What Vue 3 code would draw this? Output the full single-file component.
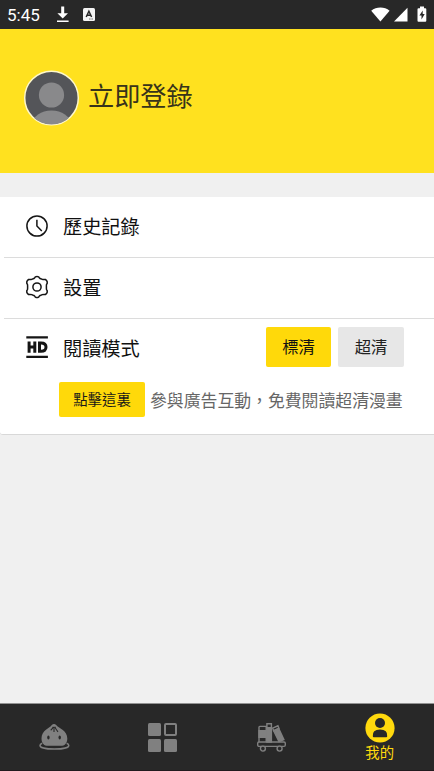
<script setup>
const account = '立即登錄'
const rows = [
  { id: 'history', label: '歷史記錄' },
  { id: 'settings', label: '設置' },
]
</script>

<template>
  <div class="screen">
    <header class="status">
      <span class="time">5:45</span>
      <svg class="download" viewBox="0 0 14 17"><path d="M5.2 .5h3v6.7H12L6.7 12.6 1.4 7.2h3.8zM1 14.6h11.6V16H1z" fill="#fff" /></svg>
      <svg class="lang" viewBox="0 0 12 13"><rect width="12" height="13" rx="1.5" fill="#f4f4f4" /><path d="M3.2 9 5.9 3.2 8.6 9M4.2 7.2h3.4" fill="none" stroke="#282828" stroke-width="1.5" /><path d="M6.4 11h1M8.6 11h1" stroke="#282828" /></svg>
      <div class="system">
        <svg width="19" height="15" viewBox="0 0 19 15"><path d="M.2 3.7C5.4-.5 13.5-.5 18.6 3.7L9.4 14.6z" fill="#fff" /></svg>
        <svg width="14" height="15" viewBox="0 0 14 15"><path d="M13.5.8v13.7H0z" fill="#fff" /></svg>
        <svg width="10" height="17" viewBox="0 0 10 17"><path d="M3 .5h4v1.8h1.3q1 0 1 1v11.4q0 1-1 1H1.5q-1 0-1-1V3.3q0-1 1-1H3z" fill="#fff" /><path d="M5.7 4.5 2.4 9.6h2.1v3.9l3.2-5.4H5.7z" fill="#282828" /></svg>
      </div>
    </header>

    <section class="profile">
      <svg class="avatar" viewBox="0 0 56 56">
        <defs><clipPath id="face"><circle cx="28" cy="28" r="26.6" /></clipPath></defs>
        <circle cx="28" cy="28" r="26.8" fill="#545559" stroke="#fff8ca" stroke-width="1.5" />
        <g clip-path="url(#face)" fill="#89898b"><circle cx="28" cy="25" r="12.6" /><ellipse cx="28" cy="54" rx="19" ry="13.4" /></g>
      </svg>
      <span class="login">{{ account }}</span>
    </section>

    <main class="card">
      <div v-for="row in rows" :key="row.id" class="row">
        <svg v-if="row.id === 'history'" class="icon" viewBox="0 0 24 24"><circle cx="12" cy="12" r="10.1" /><path d="M11.9 5.8v6.1l4.9 5" /></svg>
        <svg v-else class="icon" viewBox="0 0 24 24"><path d="M10.4 1.9Q12 .9 13.6 1.9L14.5 3.1Q15 3.7 15.8 3.8L17.4 4.4Q18.2 4.7 19 4.4L20.4 4.5Q21.8 5.3 22.2 6.8V8.3L21.7 9.2Q21.3 10 21.4 11V13Q21.3 14 21.7 14.8L22.2 15.7V17.2Q21.8 18.7 20.4 19.5L19 19.6Q18.2 19.3 17.4 19.6L15.8 20.2Q15 20.3 14.5 20.9L13.6 22.1Q12 23.1 10.4 22.1L9.5 20.9Q9 20.3 8.2 20.2L6.6 19.6Q5.8 19.3 5 19.6L3.6 19.5Q2.2 18.7 1.8 17.2V15.7L2.3 14.8Q2.7 14 2.6 13V11Q2.7 10 2.3 9.2L1.8 8.3V6.8Q2.2 5.3 3.6 4.5L5 4.4Q5.8 4.7 6.6 4.4L8.2 3.8Q9 3.7 9.5 3.1Z" /><circle cx="12" cy="12" r="4.1" /></svg>
        <span class="label">{{ row.label }}</span>
      </div>
      <div class="row mode">
        <svg class="icon" viewBox="0 0 24 24"><path d="M1.3 2.3h21.6M1.3 21.8h21.6" stroke-width="2.2" /><path d="M4.1 6.4v11.4M9.8 6.4v11.4M4.1 12.1h5.7M14.5 7.9h1.6q4.9 0 4.9 4.2t-4.9 4.2h-1.6z" stroke-width="3" /></svg>
        <span class="label">閱讀模式</span>
        <button class="quality active">標清</button>
        <button class="quality">超清</button>
      </div>
      <div class="promo">
        <button class="tap">點擊這裏</button>
        <span>參與廣告互動，免費閱讀超清漫畫</span>
      </div>
    </main>

    <nav class="tabs">
      <div class="tab">
        <svg width="31" height="29" viewBox="0 0 31 29">
          <path d="M3.2 20.2q-2.2.8-2.2 2.2c0 2.1 5.2 3.7 14.4 3.7s14.4-1.6 14.4-3.7q0-1.4-2.2-2.2" fill="none" stroke="#808080" stroke-width="1.5" />
          <path d="M12.6 2.2q2.4-2.6 4.8 0c2.6 3.2 10.9 5 10.9 13.2 0 5-2.8 7.4-6.4 7.4H8.9c-3.6 0-6.4-2.4-6.4-7.4C2.5 7.4 10.2 5.4 12.6 2.2z" fill="#808080" />
          <path d="M14.4 3.8q-1 2.2-2.7 3.4M15 4v5M15.8 3.7q.8 2.5 3.2 5.1" fill="none" stroke="#282828" stroke-width="1.1" />
          <ellipse cx="9.4" cy="14.6" rx="1.2" ry="2" fill="#282828" /><ellipse cx="20.7" cy="14.6" rx="1.2" ry="2" fill="#282828" />
        </svg>
      </div>
      <div class="tab">
        <svg width="29" height="29" viewBox="0 0 29 29" fill="#808080"><rect width="13" height="13" rx="1.5" /><rect y="16" width="13" height="13" rx="1.5" /><rect x="16" y="16" width="13" height="13" rx="1.5" /><rect x="17" y="1" width="11" height="11" rx="1" fill="none" stroke="#808080" stroke-width="2" /></svg>
      </div>
      <div class="tab">
        <svg width="29" height="29" viewBox="0 0 29 29" fill="none" stroke="#808080" stroke-width="1.4">
          <path d="M2 19V4.2q0-.8.8-.8h6.4V19" /><path d="M2 7.6h7v6.8H2z" fill="#808080" />
          <path d="M9.9 4.6h4.5V19H9.9z" fill="#808080" /><path d="M9.9 5V.7h4.5V5" />
          <path d="m15.7 5.2 5.2-2.4 1 2.7-5.2 2.3z" /><path d="m16.6 7.7 5.1-2.2L26.9 16.6l-4.9 2.1z" fill="#808080" />
          <rect x=".7" y="19" width="27.6" height="4.4" rx="1.3" /><circle cx="5.9" cy="25.6" r="2.5" fill="#282828" /><circle cx="22.6" cy="25.6" r="2.5" fill="#282828" />
        </svg>
      </div>
      <div class="tab selected">
        <svg width="30" height="30" viewBox="0 0 30 30"><circle cx="15" cy="15" r="14.6" fill="#ffd90d" /><circle cx="15" cy="10" r="5" fill="#282828" /><path d="M7.8 23.2q-.7-6.8 7.2-6.8t7.2 6.8q0 1-1 1H8.8q-1 0-1-1z" fill="#282828" /></svg>
        <span>我的</span>
      </div>
    </nav>
  </div>
</template>

<style>
body { margin: 0; background: #f0f0f0; }
</style>

<style scoped>
.screen { height: 771px; display: flex; flex-direction: column; background: #f0f0f0; font-family: "Noto Sans CJK TC", sans-serif; overflow: hidden; }
.status { height: 29px; flex: none; display: flex; align-items: center; background: #282828; color: #fff; box-sizing: border-box; padding: 0 7px 0 7px; }
.time { font: 400 17px/29px Roboto, sans-serif; width: 49px; padding-top: 1px; }
.download { width: 14px; height: 17px; }
.lang { width: 12px; height: 13px; margin-left: 13px; }
.system { display: flex; align-items: center; margin-left: auto; gap: 4px; }
.system svg:last-child { margin-left: 5px; }
.profile { height: 144px; flex: none; box-sizing: border-box; padding: 41px 0 0 23px; display: flex; align-items: flex-start; background: #ffe11f; }
.avatar { width: 57px; height: 56px; }
.login { font-size: 26.2px; line-height: 51px; margin-left: 8px; color: #37331b; }
.card { height: 238px; flex: none; margin-top: 24px; background: #fff; border-bottom: 1px solid #d8d8d8; border-bottom-left-radius: 3px; box-sizing: border-box; }
.row { height: 61px; box-sizing: border-box; display: flex; align-items: center; margin-left: 4px; padding: 0 30px 2px 21px; border-bottom: 1px solid #dcdcdc; }
.icon { width: 24px; height: 24px; fill: none; stroke: #151515; stroke-width: 1.5; }
.label { font-size: 19.2px; line-height: 28px; color: #111; margin-left: 14px; }
.card .row:first-child { height: 60.5px; }
.card .row.mode { border: 0; height: 60px; padding-bottom: 3px; }
.mode .label { padding-top: 1px; }
button { border: 0; padding: 0; font-family: inherit; border-radius: 2px; }
.quality { width: 66px; height: 40px; margin-left: 7px; background: #e7e7e7; font-size: 16.3px; line-height: 38px; padding-bottom: 2px; color: #222; }
.quality.active { width: 65px; margin-left: auto; background: #ffd90a; color: #111; }
.promo { display: flex; align-items: center; margin-left: 59px; height: 42px; font-size: 16.85px; color: #666; white-space: nowrap; }
.tap { width: 86px; height: 35px; margin-right: 5px; font-size: 14.4px; line-height: 33px; padding-bottom: 2px; color: #181818; background: #ffd90a; }
.tabs { display: grid; grid-template-columns: repeat(4, 1fr); height: 68px; box-sizing: border-box; margin-top: auto; background: #282828; border-top: 1px solid #929292; border-bottom: 1px solid #211b1e; }
.tab { display: flex; flex-direction: column; align-items: center; justify-content: center; }
.selected { justify-content: flex-start; padding-top: 9px; color: #ffd90d; font-size: 14.4px; line-height: 18px; }
</style>
